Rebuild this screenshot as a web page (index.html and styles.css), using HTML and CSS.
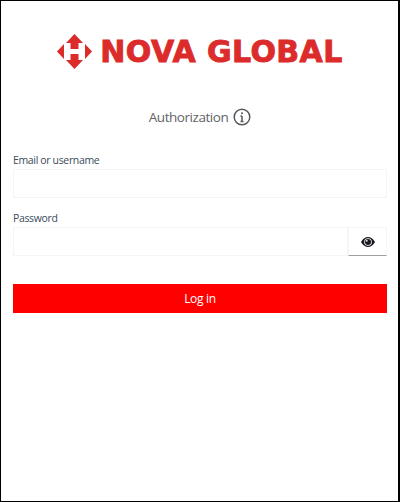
FILE: index.html
```html
<!DOCTYPE html>
<html lang="en">
<head>
<meta charset="utf-8">
<title>Nova Global</title>
<link rel="stylesheet" href="styles.css">
</head>
<body>
<main class="frame">
  <header class="logo">
    <svg class="logo-mark" width="35" height="35" viewBox="0 0 35 35" aria-hidden="true">
      <path d="M17.500 0 26 9H21.500V15H13.500V9H9Z"/>
      <path d="M17.500 35 26 26H21.500V20H13.500V26H9Z"/>
      <path d="M0 17.500 7 10V25Z"/>
      <path d="M35 17.500 28 10V25Z"/>
    </svg>
    <span class="logo-text">NOVA GLOBAL</span>
  </header>
  <h1 class="title">
    <span>Authorization</span>
    <svg class="info" width="18" height="18" viewBox="0 0 18 18" aria-hidden="true">
      <circle cx="9" cy="9" r="7.800"/>
      <path d="M9 8v5.500M7.500 8H9M7.500 13.500h3"/>
      <circle class="dot" cx="9" cy="5.200" r="1"/>
    </svg>
  </h1>
  <form class="form">
    <div class="field">
      <label class="label" for="user">Email or username</label>
      <input class="input" id="user" type="text">
    </div>
    <div class="field">
      <label class="label" for="pass">Password</label>
      <div class="input-group">
        <input class="input" id="pass" type="password">
        <button class="eye" type="button" aria-label="Show password">
          <svg width="14" height="10" viewBox="0 0 14 10" aria-hidden="true">
            <path d="M0 5C2 1.500 4.500 0 7 0s5 1.500 7 5c-2 3.500-4.500 5-7 5S2 8.500 0 5Z"/>
            <circle class="eye-white" cx="7" cy="5" r="3.800"/>
            <circle cx="7" cy="5" r="3"/>
            <circle class="eye-white" cx="5.800" cy="3.800" r=".9"/>
          </svg>
        </button>
      </div>
    </div>
    <button class="submit" type="button">Log in</button>
  </form>
</main>
</body>
</html>
```
FILE: styles.css
```css
* {
  box-sizing: border-box;
}

html,
body {
  margin: 0;
  height: 100%;
}

body {
  font-family: "Open Sans", sans-serif;
  background: #fff;
}

.frame {
  height: 502px;
  border: 1px solid #000;
  border-right-width: 2px;
  padding: 0 11px 0 12px;
}

.logo {
  display: flex;
  align-items: center;
  justify-content: center;
  gap: 8px;
  height: 35px;
  margin-top: 33px;
}

.logo-mark {
  fill: #dc2b2b;
  flex: none;
}

.logo-text {
  font-family: "DejaVu Sans", sans-serif;
  font-weight: 700;
  font-size: 30px;
  line-height: 35px;
  letter-spacing: 0.4px;
  color: #dc2b2b;
  -webkit-text-stroke: 0.9px #dc2b2b;
  white-space: nowrap;
}

.title {
  display: flex;
  align-items: center;
  justify-content: center;
  gap: 5px;
  margin: 36px 0 0;
  height: 24px;
  font-size: 13.500px;
  font-weight: 400;
  letter-spacing: -0.45px;
  color: #5f6468;
}

.info {
  fill: none;
  stroke: #54595d;
  stroke-width: 1.500;
}

.info .dot {
  fill: #54595d;
  stroke: none;
}

.form {
  display: flex;
  flex-direction: column;
  margin-top: 23px;
}

.field {
  margin-bottom: 12px;
}

.label {
  display: block;
  height: 17px;
  font-size: 10.500px;
  line-height: 17px;
  letter-spacing: -0.35px;
  color: #3b4c5c;
}

.input {
  display: block;
  width: 100%;
  height: 29px;
  margin-top: 0;
  padding: 0 8px;
  border: 1px solid #f5f5f5;
  background: #fff;
  outline: none;
}

.input-group {
  display: flex;
}

.input-group .input {
  flex: 1;
  min-width: 0;
}

.eye {
  display: flex;
  align-items: center;
  justify-content: center;
  flex: none;
  width: 39px;
  height: 29px;
  padding: 0;
  border: 1px solid #f5f5f5;
  border-bottom: 1px solid #a0a0a0;
  background: #fff;
}

.eye svg {
  fill: #15181c;
}

.eye .eye-white {
  fill: #fff;
}

.submit {
  height: 29px;
  margin-top: 16px;
  border: 0;
  background: #f00;
  color: #fff;
  font-family: inherit;
  font-size: 12px;
  letter-spacing: -0.3px;
}
```
